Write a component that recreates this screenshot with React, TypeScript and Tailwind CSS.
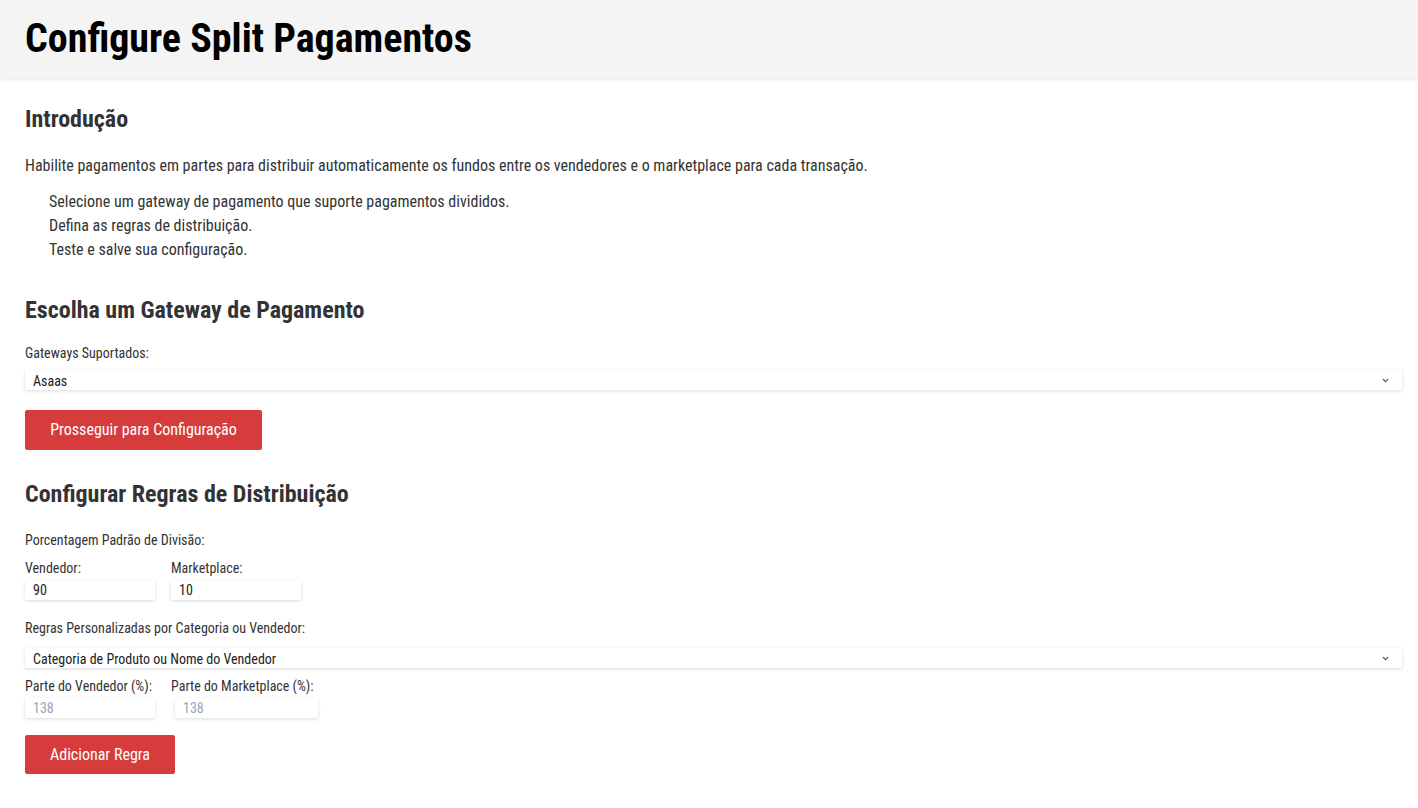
import { ChevronDown } from 'lucide-react';

const font = { fontFamily: '"Roboto Condensed", Roboto, "Liberation Sans", sans-serif', fontStretch: '75%' } as const;

function SelectBox({ value }: { value: string }) {
  return (
    <div className="relative w-[1377px]">
      <select
        defaultValue={value}
        style={font}
        className="block h-[20px] w-full appearance-none bg-white pl-[8px] pt-[1px] text-[14px] leading-[20px] text-[#222] shadow-[0_1px_3px_rgba(0,0,0,0.15)] outline-none"
      >
        <option>{value}</option>
      </select>
      <ChevronDown className="pointer-events-none absolute right-[12px] top-[6px] h-[9px] w-[9px] text-[#444]" strokeWidth={3} />
    </div>
  );
}

function NumField({ label, value, placeholder, w = 'w-[130px]', ml = '' }: { label: string; value?: string; placeholder?: string; w?: string; ml?: string }) {
  return (
    <div className="flex flex-col">
      <label className="text-[14px] leading-[16px] text-[#333]">{label}</label>
      <input
        defaultValue={value}
        placeholder={placeholder}
        style={font}
        className={`mt-[4px] block h-[20px] ${w} ${ml} bg-white pl-[8px] text-[14px] text-[#222] shadow-[0_1px_3px_rgba(0,0,0,0.15)] outline-none placeholder:text-[#9aa3b5]`}
      />
    </div>
  );
}

export default function App() {
  return (
    <div className="min-h-[808px] bg-white" style={font}>
      <header className="flex h-[78px] items-center bg-[#f4f4f4] px-[25px] shadow-[0_2px_3px_rgba(0,0,0,0.08)]">
        <h1 className="text-[40px] font-bold leading-none text-black">Configure Split Pagamentos</h1>
      </header>

      <main className="px-[25px] pb-[30px] text-[#333]">
        <h2 className="mt-[26px] text-[24px] font-bold leading-[30px]">Introdução</h2>
        <p className="mt-[20px] text-[16px] leading-[24px]">
          Habilite pagamentos em partes para distribuir automaticamente os fundos entre os vendedores e o marketplace para cada transação.
        </p>
        <ul className="mt-[12px] pl-[24px] text-[16px] leading-[24px]">
          <li>Selecione um gateway de pagamento que suporte pagamentos divididos.</li>
          <li>Defina as regras de distribuição.</li>
          <li>Teste e salve sua configuração.</li>
        </ul>

        <h2 className="mt-[33px] text-[24px] font-bold leading-[30px]">Escolha um Gateway de Pagamento</h2>
        <p className="mt-[20px] text-[14px] leading-[16px]">Gateways Suportados:</p>
        <div className="mt-[9px]">
          <SelectBox value="Asaas" />
        </div>
        <button className="mt-[20px] block h-[40px] w-[237px] rounded-[2px] bg-[#d63c3c] text-[16px] text-white">
          Prosseguir para Configuração
        </button>

        <h2 className="mt-[29px] text-[24px] font-bold leading-[30px]">Configurar Regras de Distribuição</h2>
        <p className="mt-[23px] text-[14px] leading-[16px]">Porcentagem Padrão de Divisão:</p>
        <div className="mt-[12px] flex gap-[16px]">
          <NumField label="Vendedor:" value="90" />
          <NumField label="Marketplace:" value="10" />
        </div>
        <p className="mt-[20px] text-[14px] leading-[16px]">Regras Personalizadas por Categoria ou Vendedor:</p>
        <div className="mt-[12px]">
          <SelectBox value="Categoria de Produto ou Nome do Vendedor" />
        </div>
        <div className="mt-[10px] flex gap-[16px]">
          <NumField label="Parte do Vendedor (%):" placeholder="138" />
          <NumField label="Parte do Marketplace (%):" placeholder="138" w="w-[143px]" ml="ml-[4px]" />
        </div>
        <button className="mt-[17px] block h-[39px] w-[150px] rounded-[2px] bg-[#d63c3c] text-[16px] text-white">
          Adicionar Regra
        </button>
      </main>
    </div>
  );
}
